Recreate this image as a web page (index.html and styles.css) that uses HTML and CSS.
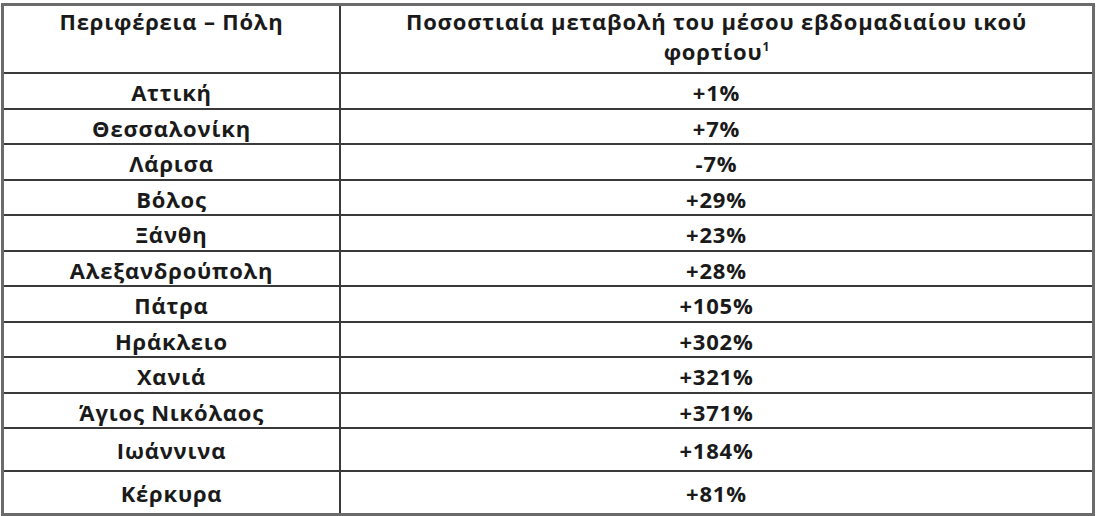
FILE: index.html
```html
<!DOCTYPE html>
<html lang="el">
<head>
<meta charset="utf-8">
<title>Ποσοστιαία μεταβολή</title>
<link rel="stylesheet" href="styles.css">
</head>
<body>
<div class="table">
  <div class="cell head left">Περιφέρεια – Πόλη</div>
  <div class="cell head right">Ποσοστιαία μεταβολή του μέσου εβδομαδιαίου ικού<br>φορτίου<sup class="sup">1</sup></div>

  <div class="cell left">Αττική</div><div class="cell right">+1%</div>
  <div class="cell left">Θεσσαλονίκη</div><div class="cell right">+7%</div>
  <div class="cell left">Λάρισα</div><div class="cell right">-7%</div>
  <div class="cell left">Βόλος</div><div class="cell right">+29%</div>
  <div class="cell left">Ξάνθη</div><div class="cell right">+23%</div>
  <div class="cell left">Αλεξανδρούπολη</div><div class="cell right">+28%</div>
  <div class="cell left">Πάτρα</div><div class="cell right">+105%</div>
  <div class="cell left">Ηράκλειο</div><div class="cell right">+302%</div>
  <div class="cell left">Χανιά</div><div class="cell right">+321%</div>
  <div class="cell left">Άγιος Νικόλαος</div><div class="cell right">+371%</div>
  <div class="cell left">Ιωάννινα</div><div class="cell right">+184%</div>
  <div class="cell left last">Κέρκυρα</div><div class="cell right last">+81%</div>
</div>
</body>
</html>
```
FILE: styles.css
```css
html, body {
  margin: 0;
  padding: 0;
  background: #ffffff;
}
.table {
  margin: 3px 0 0 1px;
  width: 1094px;
  height: 513px;
  box-sizing: border-box;
  border: 3px solid #6b6b6b;
  display: grid;
  grid-template-columns: 337px 1fr;
  grid-template-rows: 68.3px repeat(10, 35.5px) 42.4px 1fr;
  font-family: "Open Sans", "Noto Sans", sans-serif;
  font-weight: 700;
  font-size: 22px;
  letter-spacing: 0.8px;
  color: #1a1a1a;
}
.cell {
  box-sizing: border-box;
  border-bottom: 2px solid #3a3a3a;
  display: flex;
  align-items: center;
  justify-content: center;
  text-align: center;
  padding-top: 2px;
  white-space: nowrap;
}
.left {
  border-right: 2px solid #3a3a3a;
}
.head {
  display: block;
  line-height: 29.5px;
  padding-top: 1px;
}
.last {
  border-bottom: none;
}
.sup {
  font-size: 12px;
  line-height: 0;
  letter-spacing: 0;
  vertical-align: 9px;
}
```
